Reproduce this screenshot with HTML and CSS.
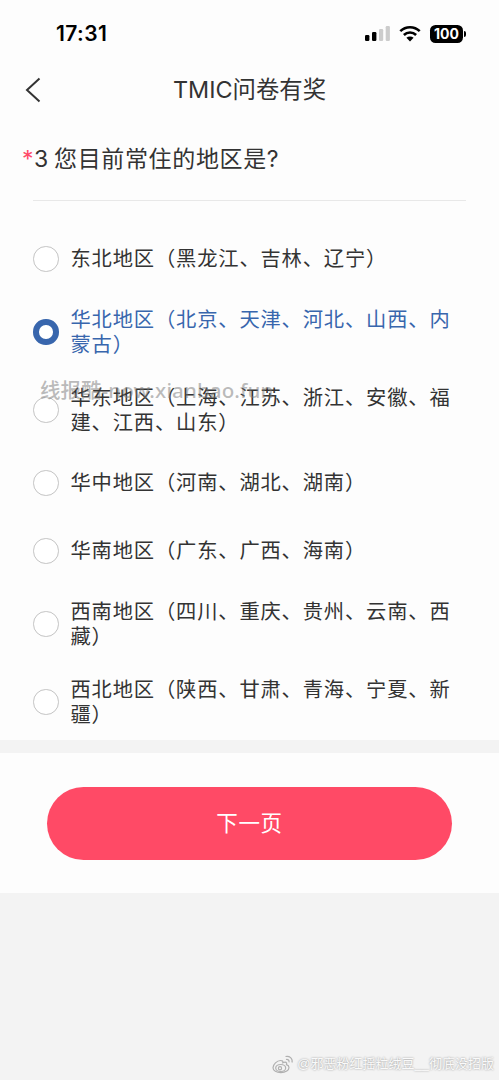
FILE: index.html
```html
<!DOCTYPE html>
<html lang="zh-CN">
<head>
<meta charset="utf-8">
<title>TMIC问卷有奖</title>
<link rel="stylesheet" href="styles.css">
</head>
<body>
<div class="screen">
  <header class="status">
    <span class="clock">17:31</span>
    <svg class="signal" width="26" height="17" viewBox="0 0 26 17">
      <rect x="0" y="10" width="4.4" height="6" rx="1.2"/>
      <rect x="7" y="7" width="4.4" height="9" rx="1.2"/>
      <rect class="dim" x="14" y="4" width="4.2" height="12" rx="1.2"/>
      <rect class="dim" x="20.7" y="1" width="4.2" height="15" rx="1.2"/>
    </svg>
    <svg class="wifi" width="22" height="17" viewBox="0 0 22 17">
      <path d="M1.300 6.100a14 14 0 0 1 19.400 0M4.900 10a8.800 8.800 0 0 1 12.200 0"/>
      <path class="solid" d="M7.400 12.800a5.300 5.300 0 0 1 7.200 0L11 16.500z"/>
    </svg>
    <span class="battery">100</span><i class="battery-tip"></i>
  </header>
  <nav class="nav">
    <svg class="back" width="16" height="26" viewBox="0 0 16 26"><path d="M14.500 1.500 2 13l12.500 11.500"/></svg>
    <h1 class="title">TMIC问卷有奖</h1>
  </nav>
  <main class="panel">
    <h2 class="question"><span class="star">*</span><span class="number">3</span>您目前常住的地区是?</h2>
    <div class="options">
      <div class="option"><i class="radio"></i><span>东北地区（黑龙江、吉林、辽宁）</span></div>
      <div class="option selected"><i class="radio"></i><span>华北地区（北京、天津、河北、山西、内<br>蒙古）</span></div>
      <div class="option"><i class="radio"></i><span>华东地区（上海、江苏、浙江、安徽、福<br>建、江西、山东）</span></div>
      <div class="option"><i class="radio"></i><span>华中地区（河南、湖北、湖南）</span></div>
      <div class="option"><i class="radio"></i><span>华南地区（广东、广西、海南）</span></div>
      <div class="option"><i class="radio"></i><span>西南地区（四川、重庆、贵州、云南、西<br>藏）</span></div>
      <div class="option"><i class="radio"></i><span>西北地区（陕西、甘肃、青海、宁夏、新<br>疆）</span></div>
      <div class="watermark">线报酷<span class="domain">-now.xianbao.fun</span></div>
    </div>
  </main>
  <section class="actions"><button class="next">下一页</button></section>
  <footer class="credit">
    <svg width="22" height="19" viewBox="0 0 22 19">
      <path d="M8.500 5.500C5 5.500 1 9.500 1 12.700c0 3 3.600 5 7.800 5 5 0 8.200-2.500 8.200-5.200 0-1.700-1.300-2.500-2.500-2.900.8-2-.7-3.300-3.700-1.900.5-1.500-.5-2.200-2.300-2.200z"/>
      <ellipse cx="8.700" cy="13" rx="5" ry="3.500"/><circle cx="8" cy="13.300" r="1.600"/>
      <path d="M13.500 1.500c4-1 7.500 2 6.500 6M14 4.500c2-.5 3.500 1 3 2.800"/>
    </svg>
    <span>@邪恶粉红摇粒绒豆__彻底没招版</span>
  </footer>
</div>
</body>
</html>
```
FILE: styles.css
```css
* { box-sizing: border-box; }
body { margin: 0; background: #f3f3f3; font-family: "Liberation Sans", "Noto Sans CJK SC", sans-serif; color: #333; }
.screen { width: 499px; height: 1080px; display: flex; flex-direction: column; overflow: hidden; }
.status { height: 60px; padding: 7px 33px 0 56px; display: flex; align-items: center; background: #fdfdfd; color: #000; }
.clock { flex: 1; font: 600 21px/24px Inter, sans-serif; letter-spacing: 0.400px; }
.signal .dim { fill: #ccc; }
.wifi { margin: 0 9px 0 8px; }
.wifi path { fill: none; stroke: #000; stroke-width: 2.600; }
.wifi .solid { fill: #000; stroke: none; }
.battery { width: 33px; height: 18px; border-radius: 5.500px; background: #000; color: #fff; font: 700 14px/18px Inter, sans-serif; text-align: center; }
.battery-tip { width: 2px; height: 6px; margin-left: 1px; border-radius: 0 2px 2px 0; background: #000; }
.nav { height: 60px; display: grid; grid-template-columns: 50px 1fr 50px; align-items: center; background: #fdfdfd; }
.back { margin-left: 25px; fill: none; stroke: #333; stroke-width: 2; }
.title { margin: 0; text-align: center; font-size: 23.400px; line-height: 30px; font-weight: 400; font-family: Inter, "Noto Sans CJK SC", sans-serif; }
.panel { height: 620px; background: #fdfdfd; }
.question { height: 81px; margin: 0 33px; padding-top: 22px; border-bottom: 1px solid #e8e8e8; font: 400 23px/34px Inter, "Noto Sans CJK SC", sans-serif; letter-spacing: 0.650px; white-space: nowrap; }
.star { display: inline-block; width: 12px; margin-left: -11px; color: #ff4a68; }
.number { display: inline-block; width: 20px; }
.options { position: relative; padding: 37.500px 33px 0; display: flex; flex-direction: column; gap: 27px; }
.option { min-height: 41px; display: flex; align-items: center; gap: 12px; font-size: 20.300px; line-height: 25.500px; letter-spacing: 0.830px; white-space: nowrap; }
.option span { padding-top: 1px; margin-bottom: -1px; }
.option:not(:has(br)) span { padding-top: 2px; margin-bottom: 0; }
.option:has(br) { height: 51px; }
.radio { flex: none; width: 25.500px; height: 25.500px; border: 1.500px solid #c4c4c4; border-radius: 50%; background: #fff; }
.selected { color: #3866ad; }
.selected .radio { border: 6.500px solid #3866ad; }
.watermark { position: absolute; left: 40px; top: 175px; font-size: 20.500px; line-height: 28px; font-weight: 500; color: rgba(120, 120, 120, 0.5); white-space: nowrap; }
.domain { font-family: "Noto Sans", sans-serif; font-size: 20.500px; letter-spacing: 0.150px; }
.actions { height: 140px; margin-top: 13px; padding: 34px 47px 33px; display: flex; background: #fdfdfd; }
.next { flex: 1; border: 0; border-radius: 37px; padding: 0 0 4px; background: #ff4a66; color: #fff; font: 400 21.500px/30px "Noto Sans CJK SC", sans-serif; letter-spacing: 0.700px; }
.credit { flex: 1; display: flex; align-items: flex-end; justify-content: flex-end; gap: 3px; padding: 0 5px 6px; font-size: 13px; line-height: 20px; color: #fafafa; text-shadow: 0 0 2px #888; white-space: nowrap; }
.credit svg { fill: none; stroke: #b0b0b0; stroke-width: 1.200; }
```
